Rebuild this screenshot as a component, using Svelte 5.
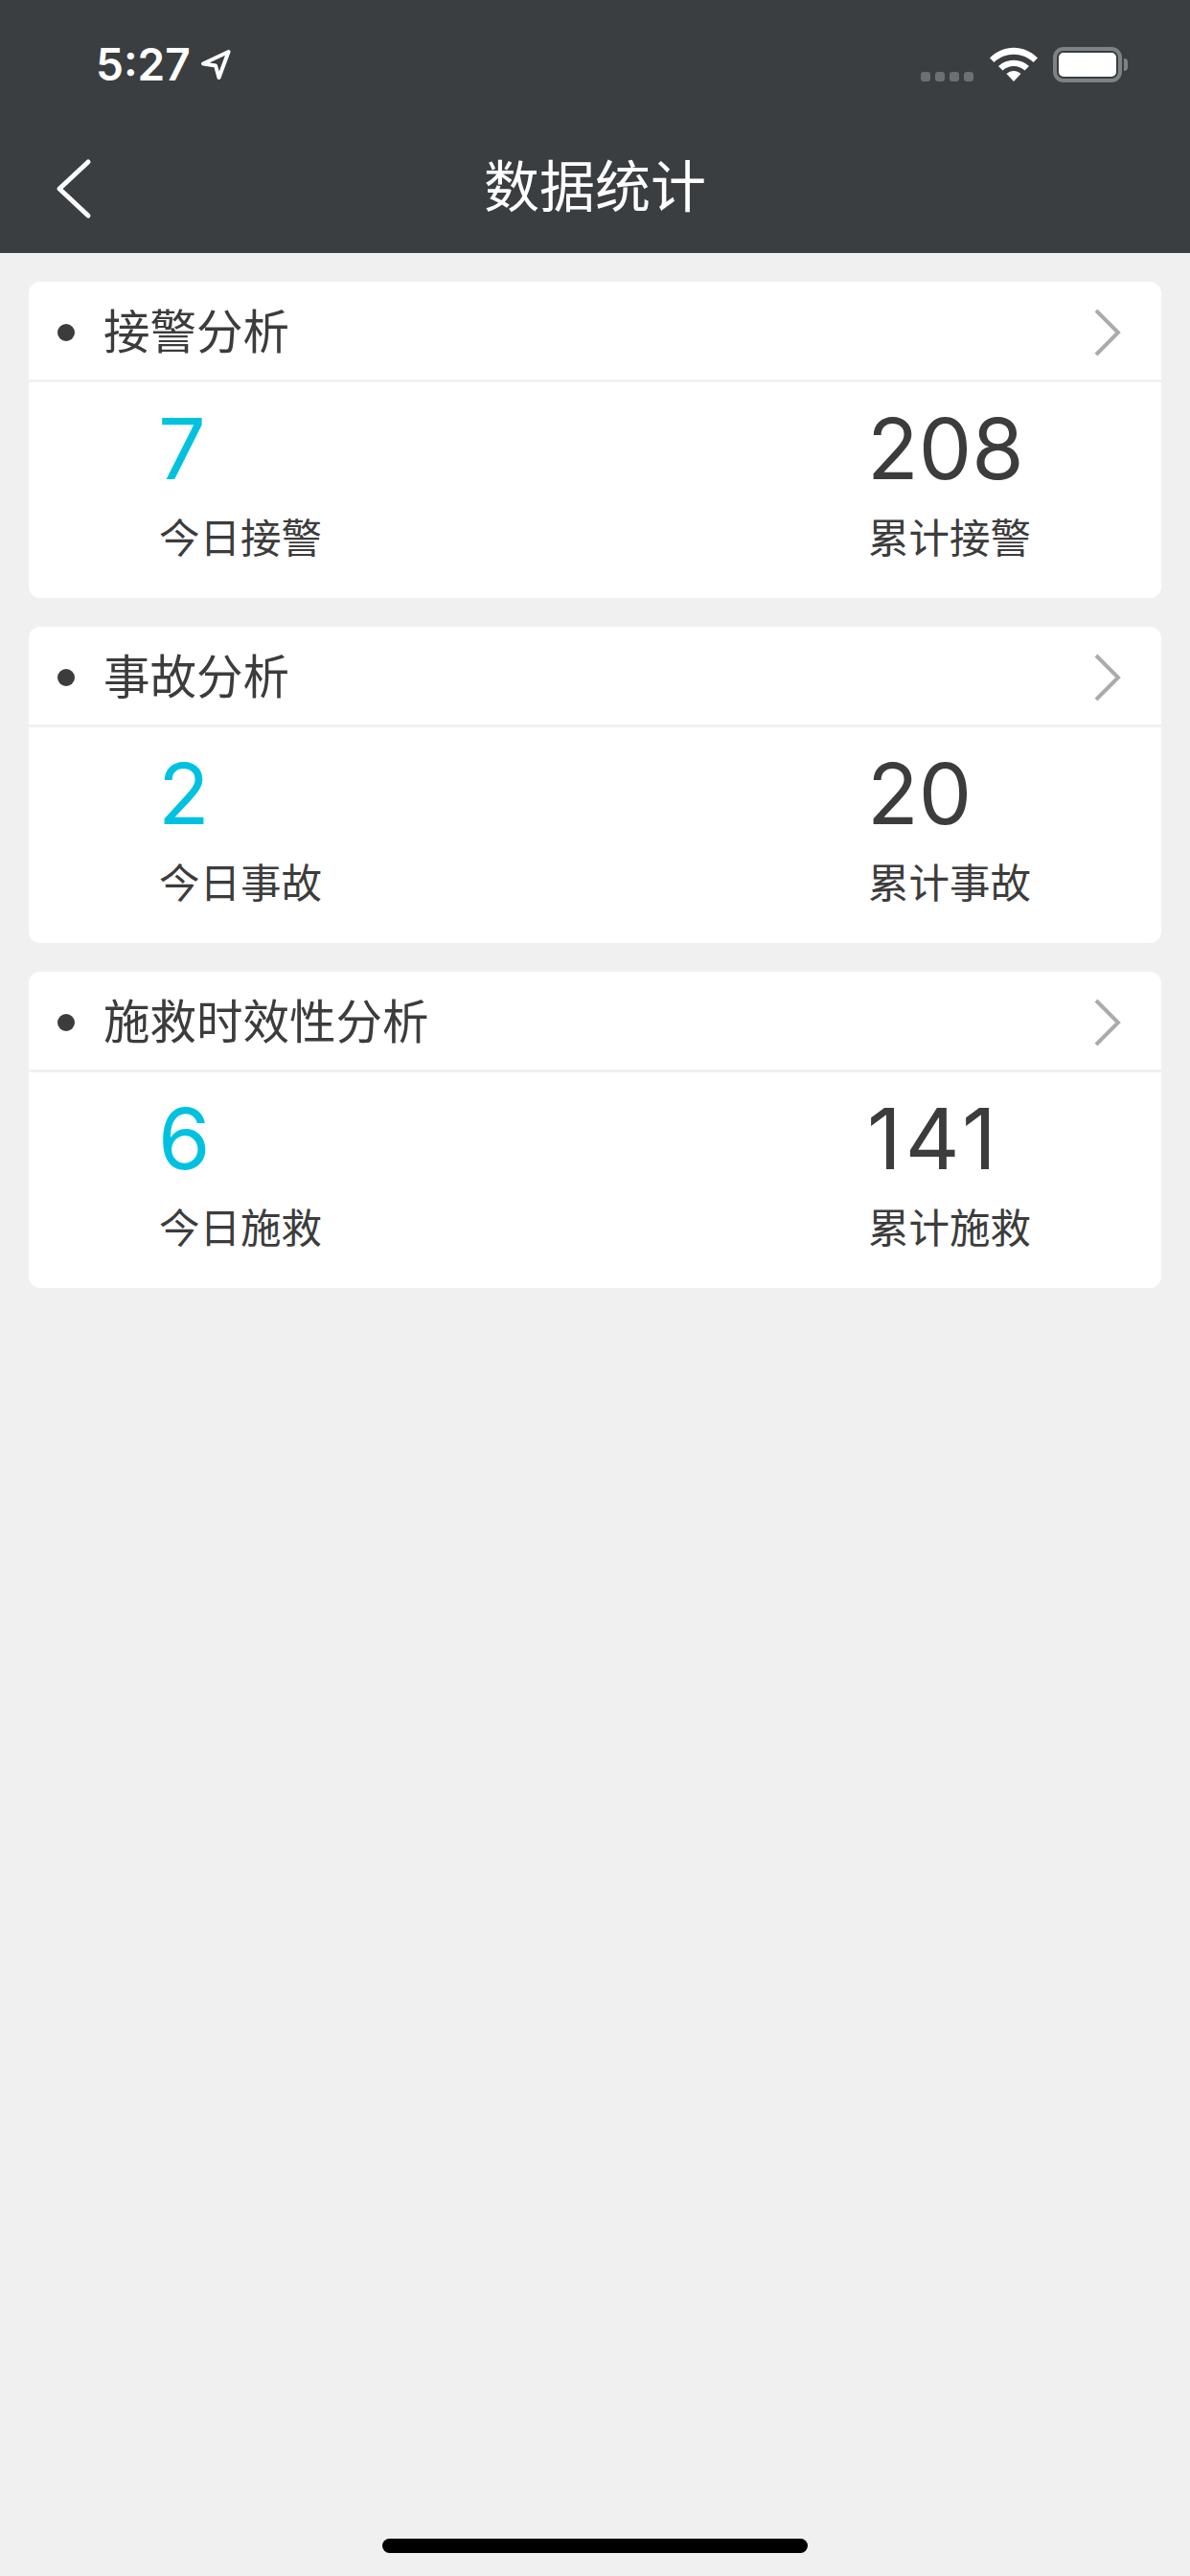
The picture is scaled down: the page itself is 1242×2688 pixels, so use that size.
<script lang="ts">
	const sections = [
		{ title: '接警分析', today: 7, total: 208, todayLabel: '今日接警', totalLabel: '累计接警' },
		{ title: '事故分析', today: 2, total: 20, todayLabel: '今日事故', totalLabel: '累计事故' },
		{ title: '施救时效性分析', today: 6, total: 141, todayLabel: '今日施救', totalLabel: '累计施救' }
	];
</script>

<div class="page">
	<header>
		<div class="status">
			<div class="time">
				<span>5:27</span>
				<svg width="32" height="33" viewBox="0 0 32 33">
					<path d="M29.5 3 L3 15.5 L16 17.5 L19.5 30 Z" fill="none" stroke="#fff" stroke-width="4" stroke-linejoin="round" />
				</svg>
			</div>
			<div class="indicators">
				<div class="dots">
					<i></i><i></i><i></i><i></i>
				</div>
				<svg class="wifi" width="50" height="36" viewBox="0 0 50 36">
					<path d="M0 11.5 C14 -3 36 -3 50 11.5 L45.5 16 C34 5 16 5 4.5 16 Z" fill="#fff" />
					<path d="M9 20 C18 11.5 32 11.5 41 20 L36.5 24.5 C30 18.5 20 18.5 13.5 24.5 Z" fill="#fff" />
					<path d="M17.5 28 C22 24 28 24 32.5 28 L25 36 Z" fill="#fff" />
				</svg>
				<div class="battery">
					<div class="cell"><div class="charge"></div></div>
					<div class="nub"></div>
				</div>
			</div>
		</div>
		<nav>
			<svg width="40" height="64" viewBox="0 0 40 64">
				<path d="M34 4 L4 32 M4 32 L34 60" fill="none" stroke="#fff" stroke-width="5" stroke-linecap="round" />
			</svg>
			<h1>数据统计</h1>
		</nav>
	</header>

	<main>
		{#each sections as s}
			<section class="card">
				<div class="card-head">
					<span class="bullet"></span>
					<span class="card-title">{s.title}</span>
					<svg class="more" width="28" height="50" viewBox="0 0 28 50">
						<path d="M2 2 L25 25 L2 48" fill="none" stroke="#ababab" stroke-width="4" />
					</svg>
				</div>
				<div class="stats">
					<div class="stat">
						<div class="num today">{s.today}</div>
						<div class="label">{s.todayLabel}</div>
					</div>
					<div class="stat">
						<!-- the 1 is narrow in Inter, open it up a bit -->
						<div class="num" class:spread={String(s.total).includes('1')}>{s.total}</div>
						<div class="label">{s.totalLabel}</div>
					</div>
				</div>
			</section>
		{/each}
	</main>

	<div class="home"></div>
</div>

<style>
	:global(body) {
		margin: 0;
		background: #f0f0f0;
	}
	.page {
		height: 2688px;
		display: flex;
		flex-direction: column;
		font-family: Inter, 'Noto Sans CJK SC', sans-serif;
		color: #3c3c3c;
		background: #f0f0f0;
	}

	/* top bar */
	header {
		height: 264px;
		background: #3a3e41;
		color: #fff;
	}
	.status {
		height: 150px;
		box-sizing: border-box;
		padding: 49px 65px 0 100px;
		display: flex;
		justify-content: space-between;
		align-items: flex-start;
	}
	.time {
		display: flex;
		align-items: center;
		gap: 10px;
		height: 36px;
	}
	.time span {
		font-size: 46px;
		font-weight: 600;
		line-height: 36px;
	}
	.indicators {
		display: flex;
		align-items: flex-start;
	}
	.dots {
		display: flex;
		gap: 5px;
		margin-top: 26px;
		margin-right: 17px;
	}
	.dots i {
		width: 10px;
		height: 10px;
		border-radius: 3px;
		background: #6c7073;
	}
	.battery {
		display: flex;
		align-items: center;
		margin-left: 16px;
	}
	.cell {
		width: 72px;
		height: 37px;
		box-sizing: border-box;
		border: 4px solid #7d8285;
		border-radius: 11px;
		padding: 2px;
	}
	.charge {
		height: 100%;
		border-radius: 5px;
		background: #fff;
	}
	.nub {
		width: 4px;
		height: 13px;
		margin-left: 2px;
		background: #7d8285;
		border-radius: 0 5px 5px 0;
	}
	nav {
		position: relative;
		display: flex;
		justify-content: center;
		align-items: center;
		height: 90px;
	}
	nav svg {
		position: absolute;
		left: 58px;
		top: 15px;
	}
	h1 {
		margin: 0;
		font-size: 58px;
		font-weight: 400;
		line-height: 90px;
	}

	/* cards */
	main {
		display: flex;
		flex-direction: column;
		gap: 30px;
		padding: 30px 30px 0;
	}
	.card {
		height: 330px;
		background: #fff;
		border-radius: 12px;
		overflow: hidden;
	}
	.card-head {
		height: 105px;
		box-sizing: border-box;
		display: flex;
		align-items: center;
		padding: 3px 42px 0 30px;
		border-bottom: 3px solid #f0f0f0;
	}
	.bullet {
		width: 18px;
		height: 18px;
		border-radius: 50%;
		background: #3c3c3c;
		margin-right: 30px;
	}
	.card-title {
		flex: 1;
		font-size: 48.5px;
		font-weight: 400;
		line-height: 60px;
	}
	.stats {
		display: flex;
		justify-content: space-between;
		padding: 0 136px;
	}
	.stat {
		width: 170px;
	}
	.num {
		font-size: 88px;
		font-weight: 400;
		line-height: 90px;
		margin-top: 24px;
		margin-left: -1px;
		white-space: nowrap;
	}
	.spread {
		letter-spacing: 4px;
	}
	.today {
		color: #00c2e0;
	}
	.label {
		font-size: 42.5px;
		font-weight: 400;
		line-height: 50px;
		margin-top: 24px;
		white-space: nowrap;
	}

	.home {
		width: 444px;
		height: 15px;
		border-radius: 8px;
		background: #000;
		margin: auto auto 24px;
	}
</style>
